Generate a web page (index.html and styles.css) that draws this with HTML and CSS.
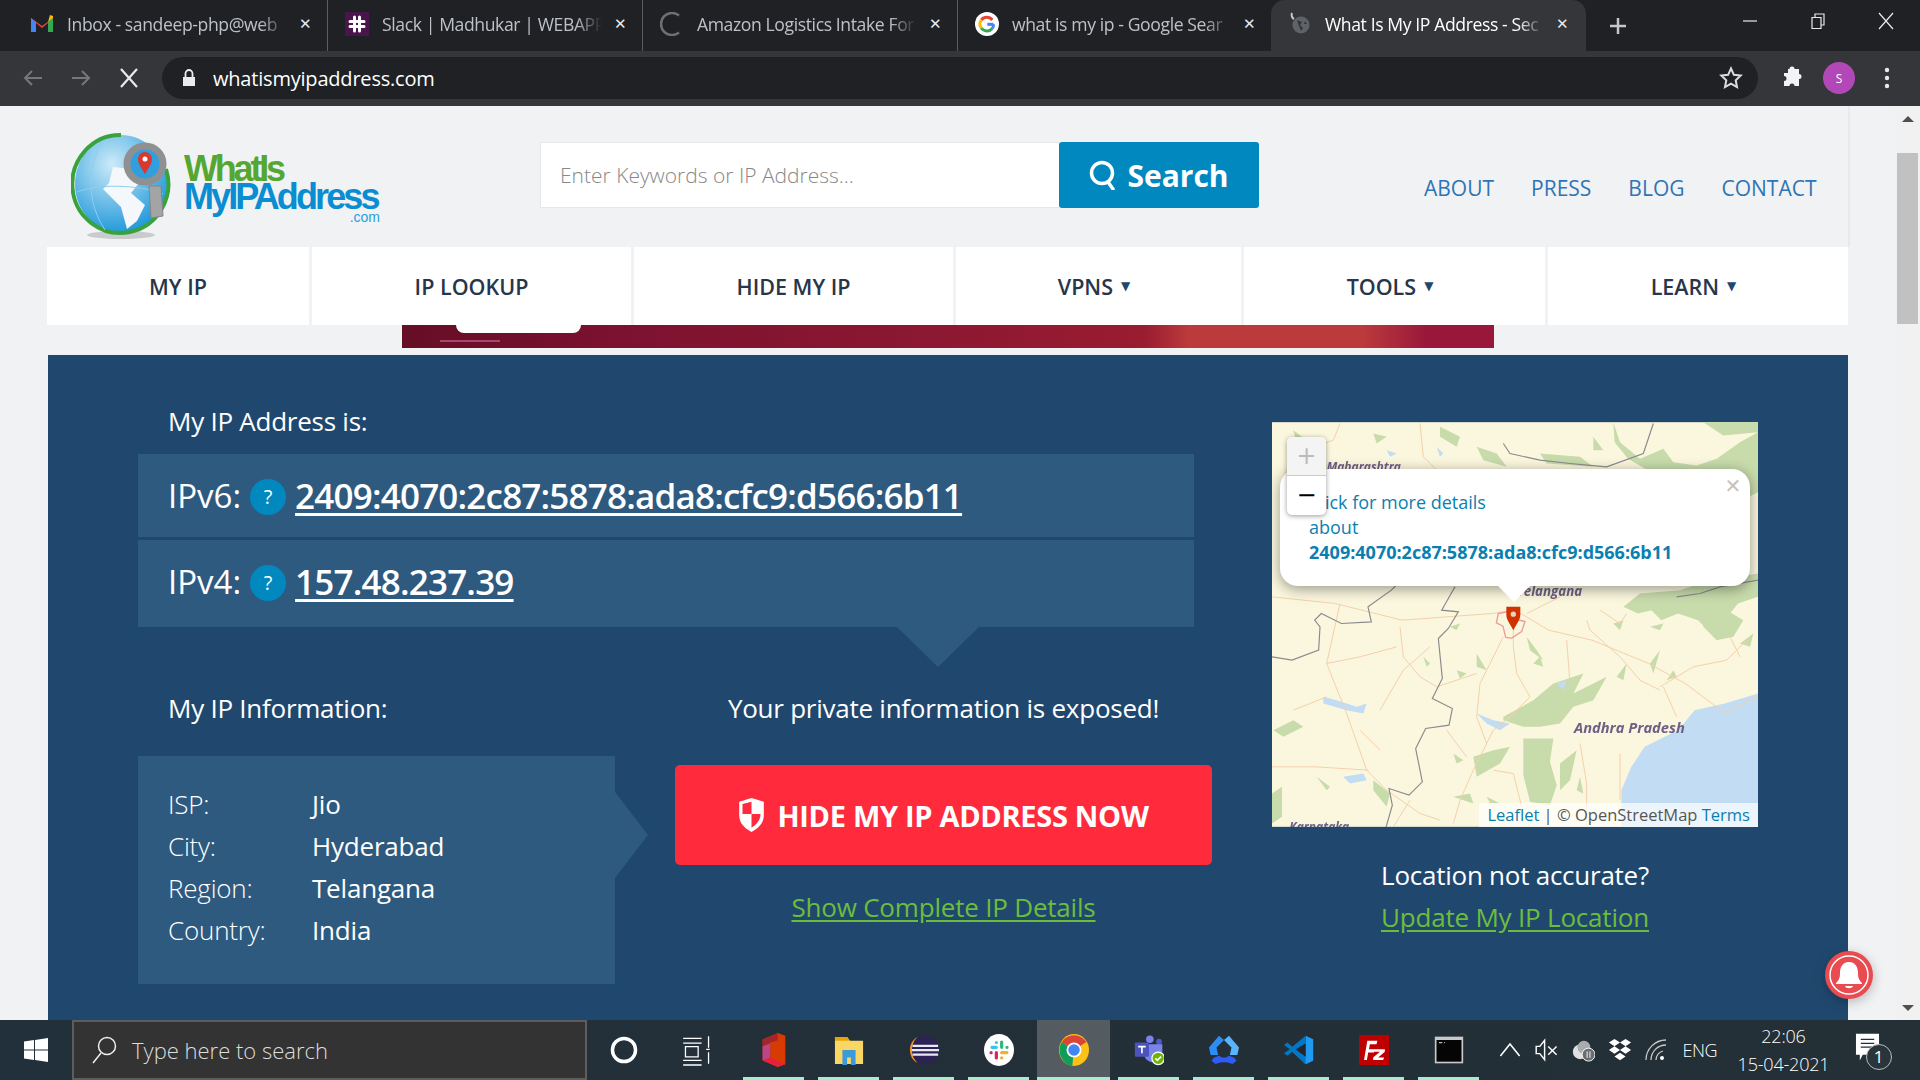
FILE: index.html
```html
<!DOCTYPE html>
<html lang="en">
<head>
    <meta charset="UTF-8">
    <meta name="viewport" content="width=device-width, initial-scale=1.0">
    <title>What Is My IP Address</title>
    <link rel="stylesheet" href="styles.css">
</head>
<body>
    <!-- browser tabs -->
    <div class="tabbar">
        <div class="tab">
            <svg class="tab-icon" viewBox="0 0 24 24"><path d="M1 20V6l11 8 11-8v14h-5V11l-6 5-6-5v9z" fill="#ea4335"/><path d="M1 20V6l5 4v10z" fill="#4285f4"/><path d="M23 20V6l-5 4v10z" fill="#34a853"/><path d="M18 10l5-4V4l-3-1z" fill="#fbbc04"/></svg>
            <span class="tab-title">Inbox - sandeep-php@web</span>
            <span class="tab-close">✕</span>
        </div>
        <div class="tab">
            <svg class="tab-icon" viewBox="0 0 24 24"><rect width="24" height="24" fill="#4a154b"/><path d="M9.5 5v14M14.500 5v14M5 9.500h14M5 14.500h14" stroke="#fff" stroke-width="3" stroke-linecap="round"/></svg>
            <span class="tab-title">Slack | Madhukar | WEBAPP</span>
            <span class="tab-close">✕</span>
        </div>
        <div class="tab">
            <svg class="tab-icon" viewBox="0 0 24 24"><path d="M19 3.500A11 11 0 1 0 19 20.500" fill="none" stroke="#6d7074" stroke-width="2.500"/></svg>
            <span class="tab-title">Amazon Logistics Intake For</span>
            <span class="tab-close">✕</span>
        </div>
        <div class="tab tab-narrow">
            <svg class="tab-icon" viewBox="0 0 24 24"><circle cx="12" cy="12" r="12" fill="#fff"/><path d="M18.500 12.300h-6.200" stroke="#4285f4" stroke-width="3"/><path d="M17.300 8A7 7 0 0 0 6.300 8" fill="none" stroke="#ea4335" stroke-width="3"/><path d="M6.300 8a7 7 0 0 0 0 8" fill="none" stroke="#fbbc04" stroke-width="3"/><path d="M6.300 16a7 7 0 0 0 11 .5" fill="none" stroke="#34a853" stroke-width="3"/><path d="M17.300 16.500a7 7 0 0 0 1.200-4.200" fill="none" stroke="#4285f4" stroke-width="3"/></svg>
            <span class="tab-title">what is my ip - Google Sear</span>
            <span class="tab-close">✕</span>
        </div>
        <div class="tab tab-active">
            <svg class="tab-icon" viewBox="0 0 24 24"><circle cx="13" cy="13" r="8.500" fill="#5f6368"/><path d="M9 8l5 2-2 3 3 3-2 3-2-5zM17 9l2 3-3 0z" fill="#35363a"/><path d="M4 1c-1 2 0 5 2 6" fill="none" stroke="#c9cacc" stroke-width="2"/></svg>
            <span class="tab-title">What Is My IP Address - Sec</span>
            <span class="tab-close">✕</span>
        </div>
        <span class="new-tab">
            <svg viewBox="0 0 18 18"><path d="M9 1v16M1 9h16" stroke="#c6c7c9" stroke-width="2.500"/></svg>
        </span>
        <div class="window-controls">
            <svg viewBox="0 0 18 18"><path d="M2 9h14" stroke="#e8eaed" stroke-width="1.200"/></svg>
            <svg viewBox="0 0 18 18"><path d="M3 5.500h9v11H3zM6 5.500V2h9v11h-3" fill="none" stroke="#e8eaed" stroke-width="1.200"/></svg>
            <svg viewBox="0 0 18 18"><path d="M2 1l14 16M16 1L2 17" stroke="#e8eaed" stroke-width="1.200"/></svg>
        </div>
    </div>

    <!-- address bar -->
    <div class="toolbar">
        <svg class="tool-icon" viewBox="0 0 24 24"><path d="M21 12H4M11 5l-7 7 7 7" fill="none" stroke="#75777a" stroke-width="2"/></svg>
        <svg class="tool-icon" viewBox="0 0 24 24"><path d="M3 12h17M13 5l7 7-7 7" fill="none" stroke="#75777a" stroke-width="2"/></svg>
        <svg class="tool-icon" viewBox="0 0 24 24"><path d="M4 3l16 18M20 3L4 21" fill="none" stroke="#e8eaed" stroke-width="2.200"/></svg>
        <div class="urlbar">
            <svg class="lock" viewBox="0 0 14 18"><path d="M1 8h12v9H1z" fill="#e8eaed"/><path d="M3.500 8V4.500a3.500 3.500 0 0 1 7 0V8" fill="none" stroke="#e8eaed" stroke-width="1.800"/></svg>
            <span class="url">whatismyipaddress.com</span>
            <svg class="star" viewBox="0 0 24 24"><path d="M12 2.500l2.900 6.300 6.800.8-5 4.700 1.300 6.800-6-3.400-6 3.400 1.300-6.800-5-4.700 6.800-.8z" fill="none" stroke="#dadce0" stroke-width="2"/></svg>
        </div>
        <svg class="puzzle" viewBox="0 0 24 24"><path d="M9 3h1.500a2.500 2.500 0 0 1 5 0H20v5a2.500 2.500 0 0 1 0 5v7h-4.500a2.500 2.500 0 0 0-5 0H5v-5a2.500 2.500 0 0 0 0-5V7h4z" fill="#f1f3f4"/></svg>
        <span class="avatar">S</span>
        <svg class="kebab" viewBox="0 0 6 24"><circle cx="3" cy="4" r="2.200" fill="#e8eaed"/><circle cx="3" cy="12" r="2.200" fill="#e8eaed"/><circle cx="3" cy="20" r="2.200" fill="#e8eaed"/></svg>
    </div>

    <div class="viewport">
        <div class="page">
            <header class="site-header">
                <a class="logo">
                    <svg class="logo-globe" viewBox="70 130 104 110">
                        <defs>
                            <radialGradient id="sea" cx="0.4" cy="0.3" r="0.8"><stop offset="0" stop-color="#cdeaf9"/><stop offset="1" stop-color="#0b8fd6"/></radialGradient>
                        </defs>
                        <ellipse cx="120" cy="233" rx="34" ry="4" fill="#c9cbcd"/>
                        <ellipse cx="120" cy="182" rx="46" ry="49" fill="url(#sea)"/>
                        <path d="M120 133a48 49 0 1 0 45 34" fill="none" stroke="#3aa23d" stroke-width="4"/>
                        <path d="M112 165l20 2 6 14-8 10 14 12-8 16-10 8-6-22-10-10-8-8 6-6z" fill="#f4f8fb"/>
                        <path d="M76 190c20-8 60-8 86 2M100 140c-14 30-14 60 4 88" fill="none" stroke="#8fcdf0" stroke-width="1"/>
                        <circle cx="144" cy="162" r="18" fill="#2f9fe0" stroke="#8f9092" stroke-width="7"/>
                        <path d="M148 184h12l2 30-12 2z" fill="#a3a4a6" stroke="#838486"/>
                        <path d="M144 172c-5-8-7-11-7-15a7 7 0 0 1 14 0c0 4-2 7-7 15z" fill="#d8382e"/>
                        <circle cx="144" cy="157" r="2.500" fill="#fff"/>
                    </svg>
                    <span class="logo-text">
                        <span class="logo-what">WhatIs</span>
                        <span class="logo-ip">MyIPAddress</span>
                        <span class="logo-com">.com</span>
                    </span>
                </a>
                <div class="search">
                    <div class="search-input">Enter Keywords or IP Address...</div>
                    <div class="search-btn">
                        <svg viewBox="0 0 28 30"><circle cx="13" cy="13" r="10.500" fill="none" stroke="#fff" stroke-width="3.500"/><path d="M19 22l5 7" stroke="#fff" stroke-width="3.500" stroke-linecap="round"/></svg>
                        Search
                    </div>
                </div>
                <nav class="top-links">
                    <a>ABOUT</a>
                    <a>PRESS</a>
                    <a>BLOG</a>
                    <a>CONTACT</a>
                </nav>
            </header>

            <nav class="menu">
                <a>MY IP</a>
                <a>IP LOOKUP</a>
                <a>HIDE MY IP</a>
                <a class="has-drop">VPNS <i>▼</i></a>
                <a class="has-drop">TOOLS <i>▼</i></a>
                <a class="has-drop">LEARN <i>▼</i></a>
            </nav>

            <div class="banner"><span class="banner-pill"></span><span class="banner-line"></span></div>

            <main class="panel">
                <section class="panel-left">
                    <h2 class="label address-label">My IP Address is:</h2>
                    <div class="ip-row">
                        <span class="ip-name">IPv6:</span>
                        <span class="ip-help">?</span>
                        <a class="ip-value">2409:4070:2c87:5878:ada8:cfc9:d566:6b11</a>
                    </div>
                    <div class="ip-row ip-row-last">
                        <span class="ip-name">IPv4:</span>
                        <span class="ip-help">?</span>
                        <a class="ip-value">157.48.237.39</a>
                    </div>
                    <div class="lower">
                        <div class="info-col">
                            <h2 class="label info-label">My IP Information:</h2>
                            <dl class="info-box">
                                <dt>ISP:</dt><dd>Jio</dd>
                                <dt>City:</dt><dd>Hyderabad</dd>
                                <dt>Region:</dt><dd>Telangana</dd>
                                <dt>Country:</dt><dd>India</dd>
                            </dl>
                        </div>
                        <div class="action-col">
                            <h2 class="label exposed">Your private information is exposed!</h2>
                            <a class="hide-btn">
                                <svg viewBox="0 0 28 38"><path d="M14 1l13 4v14c0 9-6 14-13 18C7 33 1 28 1 19V5z" fill="#fff"/><path d="M14 5v13H4.500V7.500zM14 18h9.500c0 7-4.500 11-9.500 14.500z" fill="#ff2b3d"/></svg>
                                HIDE MY IP ADDRESS NOW
                            </a>
                            <a class="green-link details-link">Show Complete IP Details</a>
                        </div>
                    </div>
                </section>

                <section class="panel-right">
                    <div class="map">
                        <svg class="map-tiles" viewBox="36 36 1458 1214">
                            <rect x="36" y="36" width="1458" height="1214" fill="#fbf7de"/>
                            <g fill="#c7dbab">
                                <path d="M1060 36l20 60 60 50 70-30 30 40 70 10 60-20 70-50 54-30v180l-60 30-40-30-90-10-70-40-60-10-70-40-40-50zM1330 36l60 40 104-10V36z"/>
                                <path d="M1090 590l50-40 120-10 60-20 174-30v70l-60 20-40 50-50 30-30-30-60-20-50 20-30-30-40 10z"/>
                                <path d="M1330 610l70-10 50 30-30 50-50 10-40-40z"/>
                                <path d="M540 50l60 30-10 30-50-30zM650 110l60 20 30 40-70-20zM840 130l120 10 40 30-140-10zM1010 190l60 20-40 30z"/>
                                <path d="M730 920l90-50 60-50 90-30-30 60 60-30 40-20-40 70-60 20-40 50-60 10-50 0-60-20z"/>
                                <path d="M790 985h90l-10 70 20 70-20 60-60-10-20-80zM640 1040l60-20 50-10-30 50-70 40zM900 1060l50-40-20 90-30 30zM1170 760l30-40-20 70zM1070 800l30-40-10 50zM800 680l30 40 20 30-40-30zM650 730l30 50-30-10zM590 780l30 10-20 15zM490 740l20 20-10 10z"/>
                                <path d="M170 1100l40 30-10 10zM340 1110l50 40-10 40-40-50zM36 1150l30-20 0 90-30 20zM40 960l60-30 30 20-60 30zM580 1030l30 20-20 10zM580 1160l50-10 10 30zM680 1160l40 20-30 0zM960 1100l10 50-20-10z"/>
                                <path d="M1170 650l40-10-10 20zM1060 640l30-10-10 30zM820 760l30 10-10-30zM600 640l-30 10 20 10zM1440 700l40-30-10 40zM1240 780l-20 30 30-10zM100 60l40 30-30 10zM340 70l40 10-30 20zM1000 80l30 40-30 0z"/>
                            </g>
                            <g fill="#c1dcf3">
                                <path d="M1494 850l-100 30-90 20-50 60-100 50-40 60-30 70v110l80 0h330z"/>
                                <path d="M190 860l40 10 60 20 30-10-10 30-50-10-70-20zM650 910l50 20 50 10-30 20-40-20zM530 110l20 20-10 10zM380 120l30 10-20 10zM890 820l30-10-10 30zM250 1100l60-10 10 20-50 10z"/>
                            </g>
                            <g fill="none" stroke="#f5d0aa" stroke-width="3">
                                <path d="M36 560l190 20 200 50 270-20 70-10 100 60 130 30 170 70 110 60 120 90 110-60 180-60"/>
                                <path d="M760 640v70l10 80 40 70-60 60-50 40-60 120-40 90-20 70"/>
                                <path d="M730 680l-40 80-30 60-10 100 30 80"/>
                                <path d="M200 760l60 150 60 170 60 60 100 70 60 20M36 1070l130 0 160 10"/>
                                <path d="M420 650l10 90 50 60 50 30 120-40M360 900l70-120 80-70M200 760l100-20 110-30"/>
                                <path d="M920 690l10 130M990 660l90 80 60 70 60 30M1210 830l40 90M240 580l-40 180"/>
                                <path d="M480 40l10 100 60 60M240 40l-20 50-120 40M900 560l-100 50M1020 600l60 40 20-30"/>
                                <path d="M1200 830l100-60 100-20 60-60M980 630l10 30M1410 680l30 60M100 900l100-40M300 960l60 60M560 960l60 80M700 1080l60 10 30 120M960 1000l20 120 0 130M1080 1030l0 140M400 1250l50-80"/>
                            </g>
                            <g fill="none" stroke="#8b8a8d" stroke-width="3.500">
                                <path d="M36 740l60 10 80-30 4-70-16-20 20-20 60 30 90-5-10-45 70-50 30-30"/>
                                <path d="M585 530l-40 70 50 5-30 50-30 30 12 120-30 60 60 30-10 50-70 10-30 60 20 100-40 40-60-20 10 50-20 70"/>
                                <path d="M730 100l20 30 90 20 90 10 110 10 110-40 30-90M1250 560l70-10 60-20 114-20"/>
                            </g>
                            <path d="M715 610l30-6 10 20 40 10-10 30-30 20-18-2-8-34-20-10z" fill="none" stroke="#f09a95" stroke-width="4"/>
                            <g class="map-label">
                                <text x="200" y="182">Maharashtra</text>
                                <text x="770" y="558" class="map-label-mid">Telangana</text>
                                <text x="942" y="968" class="map-label-big">Andhra Pradesh</text>
                                <text x="88" y="1262">Karnataka</text>
                            </g>
                            <path d="M760 660c-14-24-21-34-21-46v-24h42v24c0 12-7 22-21 46z" fill="#d03300"/>
                            <circle cx="760" cy="612" r="8" fill="#f2cfc2"/>
                        </svg>
                        <div class="zoom-control">
                            <span class="zoom-in">+</span>
                            <span class="zoom-out">−</span>
                        </div>
                        <div class="popup">
                            <span class="popup-close">✕</span>
                            <a>Click for more details<br>about<br><b>2409:4070:2c87:5878:ada8:cfc9:d566:6b11</b></a>
                        </div>
                        <div class="attribution"><a>Leaflet</a> | © OpenStreetMap <a>Terms</a></div>
                    </div>
                    <p class="label not-accurate">Location not accurate?</p>
                    <a class="green-link update-link">Update My IP Location</a>
                </section>
            </main>

            <div class="bell">
                <svg viewBox="0 0 40 40"><circle cx="20" cy="20" r="19" fill="none" stroke="#fff" stroke-width="1.500"/><path d="M20 7c-7 0-9 6-9 11 0 5-1 7-4 10v1h26v-1c-3-3-4-5-4-10 0-5-2-11-9-11z" fill="#fff"/><path d="M16 31h8c-1 3-7 3-8 0z" fill="#fff"/></svg>
            </div>
        </div>
        <div class="scrollbar">
            <span class="scroll-up"></span>
            <span class="scroll-thumb"></span>
            <span class="scroll-down"></span>
        </div>
    </div>

    <!-- windows taskbar -->
    <div class="taskbar">
        <div class="start">
            <svg viewBox="0 0 24 24"><path d="M0 3.500l10-1.400V11.500H0zM11 2l13-2v11.500H11zM0 12.500h10V22L0 20.500zM11 12.500h13V24l-13-2z" fill="#fff"/></svg>
        </div>
        <div class="task-search">
            <svg viewBox="0 0 26 28"><circle cx="16" cy="10" r="8.500" fill="none" stroke="#eee" stroke-width="1.500"/><path d="M10 17L2 27" stroke="#eee" stroke-width="1.500"/></svg>
            <span>Type here to search</span>
        </div>
        <div class="task-icons">
            <span class="task"><svg viewBox="0 0 26 26"><circle cx="13" cy="13" r="10" fill="none" stroke="#fff" stroke-width="3"/></svg></span>
            <span class="task task-view"><svg viewBox="0 0 26 26"><path d="M1 3h16M1 7h16M3 10h11v9H3zM1 22h16M1 26h16M23 1v10M23 15v10M21 12.500h3" fill="none" stroke="#fff" stroke-width="1.100"/></svg></span>
            <span class="task task-open"><svg viewBox="0 0 26 36"><path d="M17 0l8 3v30l-8 3L1 29V7z" fill="#d83b01"/><path d="M17 0L1 7v22l8-3V10l8-2z" fill="#a4262c"/><path d="M1 29l16 7 8-3-16-7z" fill="#e8203a"/><path d="M1 14l8-3v15l-8 3z" fill="#b7478a"/></svg></span>
            <span class="task task-open"><svg viewBox="0 0 32 34"><path d="M1 3h13l3 4h14v25H1z" fill="#fcd664"/><path d="M1 3h13l3 4H1z" fill="#e5a50a"/><path d="M9 17h14v16h-5v-8h-4v8H9z" fill="#3b9ad9"/></svg></span>
            <span class="task task-open"><svg viewBox="0 0 34 36"><circle cx="18" cy="18" r="16" fill="#2c2255"/><path d="M10 3a17 17 0 0 0 0 30A20 20 0 0 1 10 3z" fill="#f7941e"/><path d="M4 12h29v2.500H4zM3 17h31v2.500H3zM4 22h29v2.500H4z" fill="#e8e8f4"/></svg></span>
            <span class="task task-open"><svg viewBox="0 0 34 36"><ellipse cx="17" cy="18" rx="17" ry="18" fill="#fff"/><g stroke-width="3.600" stroke-linecap="round"><path d="M9 15h5M14 9.500h.1" stroke="#36c5f0"/><path d="M20 9v6M26 15h.1" stroke="#2eb67d"/><path d="M20 21h6M20 27h.1" stroke="#ecb22e"/><path d="M14 21v6M8 21h.1" stroke="#e01e5a"/></g></svg></span>
            <span class="task task-active"><svg viewBox="0 0 34 36"><ellipse cx="17" cy="18" rx="17" ry="18" fill="#fbc116"/><path d="M17 18L3 9A17 18 0 0 1 31 9z" fill="#db4437"/><path d="M17 18L3 9A17 18 0 0 0 15 36z" fill="#0f9d58"/><circle cx="17" cy="18" r="8.500" fill="#fff"/><circle cx="17" cy="18" r="6.500" fill="#4285f4"/></svg></span>
            <span class="task task-open"><svg viewBox="0 0 36 36"><circle cx="19" cy="5" r="4.500" fill="#7b83eb"/><circle cx="30" cy="8" r="3.500" fill="#5059c9"/><path d="M12 11h22v11c0 8-5 11-10 11s-12-3-12-11z" fill="#7b83eb"/><rect x="1" y="9" width="17" height="17" rx="1.500" fill="#4b53bc"/><path d="M5 13h9v2h-3.500v7h-2v-7H5z" fill="#fff"/><circle cx="29" cy="28" r="7.500" fill="#6bb700" stroke="#fff" stroke-width="1.500"/><path d="M25.500 28l2.500 2.500 4.500-4.500" fill="none" stroke="#fff" stroke-width="2"/></svg></span>
            <span class="task task-open"><svg viewBox="0 0 36 36"><path d="M12 1l6 5-9 9 2 9-9 0-2-9z" fill="#2e8cf5"/><path d="M24 1l-6 5 9 9-2 9 9 0 2-9z" fill="#59b4fb"/><path d="M6 27l6-2c4 3 8 3 12 0l6 2 3 4-5 4c-5-3-15-3-20 0l-5-4z" fill="#2e5cf5"/></svg></span>
            <span class="task task-open"><svg viewBox="0 0 36 36"><path d="M26 1l9 4v26l-9 4-16-15 16-12z" fill="#1f9cf0"/><path d="M26 1v34L10 20 4 25 0 22l7-5-7-5 4-3 6 5z" fill="#0078c8"/><path d="M26 10L14 17.500 26 26z" fill="#23272c"/></svg></span>
            <span class="task task-open"><svg viewBox="0 0 36 36"><rect width="36" height="36" fill="#bf0000"/><path d="M6 30L10 7h12l-1 4h-8l-1 6h7l-1 4h-7l-1.500 9zM19 17h12v3l-8 7h7l-1 3H17v-3l8-7h-7z" fill="#fff"/></svg></span>
            <span class="task task-open"><svg viewBox="0 0 36 36"><rect x="1" y="2" width="34" height="32" fill="#c8c9ca"/><rect x="3" y="6" width="30" height="26" fill="#050505"/><path d="M6 9h4M12 9h1" stroke="#bbb" stroke-width="1.500"/></svg></span>
        </div>
        <div class="tray">
            <span class="tray-icon"><svg viewBox="0 0 20 20"><path d="M2 15l8-10 8 10" fill="none" stroke="#fff" stroke-width="1.300"/></svg></span>
            <span class="tray-icon"><svg viewBox="0 0 20 20"><path d="M1 7h3l4-5v16l-4-5H1zM11 7l7 7M18 7l-7 7" fill="none" stroke="#fff" stroke-width="1.200"/></svg></span>
            <span class="tray-icon"><svg viewBox="0 0 26 24"><circle cx="10" cy="14" r="8" fill="#dfe0e1"/><circle cx="14" cy="9" r="7" fill="#a9acae"/><circle cx="19" cy="17" r="7" fill="#6a6d70" stroke="#fff" stroke-width="1"/><path d="M17.500 13.500v7M20.500 13.500v7" stroke="#fff"/></svg></span>
            <span class="tray-icon"><svg viewBox="0 0 24 26"><path d="M6 1l6 4-6 4-6-4zM18 1l6 4-6 4-6-4zM6 9l6 4-6 4-6-4zM18 9l6 4-6 4-6-4zM12 16l6 4-6 4-6-4z" fill="#fff"/></svg></span>
            <span class="tray-icon"><svg viewBox="0 0 24 24"><path d="M2 22A20 20 0 0 1 22 2M7 22A15 15 0 0 1 22 7M12 22A10 10 0 0 1 19 13" fill="none" stroke="#c9cbcc" stroke-width="1.300"/><circle cx="18" cy="20" r="2" fill="#fff"/></svg></span>
            <span class="tray-lang">ENG</span>
            <span class="tray-clock">22:06<br>15-04-2021</span>
            <span class="notify">
                <svg viewBox="0 0 26 36"><path d="M1 1h24v22H8l-3 6v-6H1z" fill="#fff"/><path d="M6 7h14M6 11h14M6 15h14" stroke="#232f36" stroke-width="1.300"/></svg>
                <span class="notify-count">1</span>
            </span>
        </div>
    </div>
</body>
</html>
```

FILE: styles.css
```css
* {
    box-sizing: border-box;
}
html, body {
    margin: 0;
    padding: 0;
    height: 100%;
    overflow: hidden;
}
body {
    display: flex;
    flex-direction: column;
    width: 1920px;
    height: 1080px;
    font-family: "Open Sans", "Liberation Sans", sans-serif;
    background: #f1f2f4;
}
a {
    text-decoration: none;
}

/* browser chrome */
.tabbar {
    display: flex;
    align-items: flex-end;
    height: 51px;
    padding-left: 13px;
    background: #202124;
}
.tab {
    display: flex;
    align-items: center;
    width: 315px;
    height: 51px;
    padding: 0 12px 3px 17px;
    color: #bdc1c6;
    font-size: 17.600px;
    letter-spacing: -0.4px;
    border-right: 1px solid #5b5d60;
    background-clip: padding-box;
}
.tab-narrow {
    width: 313px;
    border-right: 0;
}
.tab-active {
    height: 51px;
    padding-right: 14px;
    background: #35363a;
    border: 0;
    border-radius: 14px 14px 0 0;
    color: #fff;
}
.tab-icon {
    width: 24px;
    height: 24px;
    flex: none;
    margin-right: 13px;
}
.tab-title {
    flex: 1;
    min-width: 0;
    overflow: hidden;
    white-space: nowrap;
    -webkit-mask-image: linear-gradient(to right, #000 88%, transparent 100%);
    mask-image: linear-gradient(to right, #000 88%, transparent 100%);
}
.tab-close {
    flex: none;
    width: 20px;
    margin-left: 8px;
    font-size: 15px;
    font-weight: 700;
    font-family: "DejaVu Sans", sans-serif;
    color: #e8eaed;
    text-align: center;
}
.new-tab {
    display: flex;
    margin: 0 0 16px 23px;
}
.new-tab svg {
    width: 18px;
    height: 18px;
}
.window-controls {
    display: flex;
    gap: 50px;
    margin: 0 0 21px 114px;
}
.window-controls svg {
    width: 18px;
    height: 18px;
}

.toolbar {
    display: flex;
    align-items: center;
    height: 55px;
    padding: 6px 0 7px 21px;
    background: #35363a;
}
.tool-icon {
    width: 24px;
    height: 24px;
    margin-right: 24px;
}
.urlbar {
    display: flex;
    align-items: center;
    width: 1596px;
    height: 42px;
    margin-left: -3px;
    padding: 0 15px 0 20px;
    background: #202124;
    border-radius: 21px;
}
.lock {
    width: 14px;
    height: 18px;
    margin-right: 17px;
}
.url {
    flex: 1;
    color: #fff;
    font-size: 20px;
    letter-spacing: -0.2px;
}
.star {
    width: 24px;
    height: 24px;
}
.puzzle {
    width: 24px;
    height: 24px;
    margin-left: 21px;
}
.avatar {
    display: flex;
    align-items: center;
    justify-content: center;
    width: 32px;
    height: 32px;
    margin-left: 20px;
    border-radius: 50%;
    background: #b247b8;
    color: #fff;
    font-size: 12px;
}
.kebab {
    width: 6px;
    height: 24px;
    margin-left: 29px;
}

/* page */
.viewport {
    display: flex;
    flex: 1;
    min-height: 0;
}
.page {
    position: relative;
    width: 1895px;
    padding-left: 48px;
    overflow: hidden;
}
.site-header {
    display: flex;
    width: 1802px;
    height: 141px;
    border-right: 2px solid #e8e9eb;
}
.logo {
    display: flex;
    margin: 26px 0 0 25px;
    height: 110px;
}
.logo-globe {
    width: 104px;
    height: 110px;
    margin-left: -2px;
}
.logo-text {
    display: flex;
    flex-direction: column;
    margin: 23px 0 0 9px;
    width: 196px;
    font-family: "Liberation Sans", sans-serif;
    font-weight: 700;
    font-size: 36px;
    line-height: 28px;
}
.logo-what {
    color: #56a632;
    letter-spacing: -3.200px;
}
.logo-ip {
    color: #0b8dd2;
    letter-spacing: -2.900px;
}
.logo-com {
    align-self: flex-end;
    margin-top: -1px;
    color: #27a0dc;
    font-size: 14px;
    font-weight: 400;
    line-height: 14px;
}
.search {
    display: flex;
    height: 66px;
    margin: 36px 0 0 160px;
}
.search-input {
    width: 519px;
    padding: 0 19px;
    background: #fff;
    border: 1px solid #e8e8e8;
    border-right: 0;
    color: #888;
    font-size: 21px;
    font-weight: 300;
    line-height: 64px;
}
.search-btn {
    display: flex;
    align-items: center;
    justify-content: center;
    gap: 10px;
    width: 200px;
    background: #0088bf;
    border-radius: 3px;
    color: #fff;
    font-size: 30px;
    font-weight: 700;
}
.search-btn svg {
    width: 28px;
    height: 30px;
}
.top-links {
    display: flex;
    gap: 37px;
    margin: 68px 0 0 165px;
    font-size: 21px;
    line-height: 29px;
}
.top-links a {
    color: #2f74b5;
}

.menu {
    display: grid;
    grid-template-columns: 262px 319px 319px 285px 301px 300px;
    gap: 3px;
    width: 1801px;
    margin-left: -1px;
    height: 78px;
}
.menu a {
    display: flex;
    align-items: center;
    justify-content: center;
    gap: 8px;
    background: #fff;
    color: #27364a;
    font-size: 21.500px;
    font-weight: 600;
}
.menu .has-drop {
    padding-right: 9px;
}
.menu i {
    font-size: 12px;
    font-style: normal;
    color: #1f4870;
    font-family: "DejaVu Sans", sans-serif;
}

.banner {
    position: relative;
    width: 1092px;
    height: 23px;
    margin: 0 0 7px 354px;
    background: linear-gradient(to right, #650e25 0, #7c1230 20%, #8d1832 50%, #991c30 68%, #bb3a3c 72%, #bb3a3c 88%, #98173a 94%);
}
.banner-pill {
    position: absolute;
    left: 54px;
    top: 0;
    width: 125px;
    height: 8px;
    background: #fff;
    border-radius: 0 0 8px 8px;
}
.banner-line {
    position: absolute;
    left: 38px;
    top: 15px;
    width: 60px;
    height: 2px;
    background: #a8476e;
}

.panel {
    display: flex;
    width: 1800px;
    height: 665px;
    padding-left: 90px;
    background: #20486f;
    color: #fff;
}
.panel-left {
    width: 1074px;
    flex: none;
}
.label {
    margin: 0;
    font-size: 26px;
    font-weight: 400;
    letter-spacing: -0.25px;
    line-height: 36px;
}
.address-label {
    padding: 48px 0 0 30px;
    height: 99px;
}
.ip-row {
    display: flex;
    align-items: center;
    width: 1056px;
    height: 83px;
    margin-bottom: 3px;
    padding: 0 0 0 30px;
    background: #2e5a80;
}
.ip-row-last {
    position: relative;
    height: 87px;
    margin-bottom: 0;
    padding-bottom: 4px;
}
.ip-row-last::after {
    content: "";
    position: absolute;
    left: 759px;
    top: 100%;
    border-style: solid;
    border-width: 40px 41px 0;
    border-color: #2e5a80 transparent transparent;
}
.ip-name {
    font-size: 33px;
    font-weight: 400;
}
.ip-help {
    display: flex;
    align-items: center;
    justify-content: center;
    width: 36px;
    height: 36px;
    margin: 2px 9px 0 9px;
    border-radius: 50%;
    background: #0088bf;
    font-size: 20px;
}
.ip-value {
    color: #fff;
    font-size: 35px;
    font-weight: 600;
    letter-spacing: -0.8px;
    text-decoration: underline;
    text-decoration-thickness: 3px;
    text-underline-offset: 4px;
}
.lower {
    display: flex;
    margin-top: 63px;
}
.info-col {
    width: 537px;
}
.info-label {
    padding-left: 30px;
}
.info-box {
    position: relative;
    display: grid;
    grid-template-columns: 144px 1fr;
    align-content: center;
    width: 477px;
    height: 228px;
    margin: 30px 0 0;
    padding: 0 0 6px 30px;
    background: #2e5a80;
    font-size: 26px;
    letter-spacing: -0.2px;
    line-height: 42px;
}
.info-box::after {
    content: "";
    position: absolute;
    left: 100%;
    top: 36px;
    border-style: solid;
    border-width: 43px 0 43px 33px;
    border-color: transparent transparent transparent #2e5a80;
}
.info-box dt {
    font-weight: 300;
}
.info-box dd {
    margin: 0;
}
.action-col {
    display: flex;
    flex-direction: column;
    align-items: center;
    width: 537px;
}
.hide-btn {
    display: flex;
    align-items: center;
    justify-content: center;
    gap: 12px;
    width: 537px;
    height: 100px;
    margin-top: 39px;
    background: #ff2b3d;
    border-radius: 5px;
    color: #fff;
    font-size: 29px;
    font-weight: 700;
    letter-spacing: -0.3px;
}
.hide-btn svg {
    width: 27px;
    height: 36px;
}
.green-link {
    color: #6cbd3c;
    font-size: 26px;
    letter-spacing: -0.2px;
    line-height: 36px;
    text-decoration: underline;
    text-underline-offset: 3px;
}
.details-link {
    margin-top: 24px;
}
.panel-right {
    display: flex;
    flex-direction: column;
    align-items: center;
    width: 486px;
    margin-left: 60px;
    padding-top: 67px;
}
.not-accurate {
    margin-top: 30px;
}
.update-link {
    margin-top: 6px;
}

/* map, the leaflet parts sit over the tiles */
.map {
    position: relative;
    width: 486px;
    height: 405px;
    overflow: hidden;
    flex: none;
}
.map-tiles {
    display: block;
    width: 486px;
    height: 405px;
    filter: blur(0.4px);
}
.map-label text {
    fill: #6d5f85;
    font-family: "Open Sans", sans-serif;
    font-size: 36px;
    font-style: italic;
    font-weight: 700;
}
.map-label .map-label-big {
    font-size: 44px;
}
.map-label .map-label-mid {
    font-size: 40px;
}
.zoom-control {
    position: absolute;
    z-index: 3;
    left: 15px;
    top: 15px;
    width: 39px;
    height: 78px;
    border-radius: 5px;
    background: #fff;
    box-shadow: 0 1px 5px rgba(0,0,0,0.4);
    font-family: "DejaVu Sans", sans-serif;
    text-align: center;
    font-size: 24px;
    line-height: 38px;
}
.zoom-in {
    display: block;
    height: 39px;
    background: #f4f4f4;
    border-bottom: 1px solid #ccc;
    border-radius: 5px 5px 0 0;
    color: #bbb;
}
.zoom-out {
    display: block;
    color: #000;
}
.popup {
    position: absolute;
    left: 8px;
    top: 47px;
    width: 470px;
    height: 117px;
    padding: 21px 0 0 29px;
    background: #fff;
    border-radius: 18px;
    box-shadow: 0 3px 14px rgba(0,0,0,0.4);
    font-size: 18px;
    line-height: 25px;
}
.popup a {
    color: #0a7fb0;
}
.popup b {
    font-weight: 700;
}
.popup::after {
    content: "";
    position: absolute;
    left: 218px;
    top: 100%;
    border-style: solid;
    border-width: 16px 16px 0;
    border-color: #fff transparent transparent;
}
.popup-close {
    position: absolute;
    right: 6px;
    top: 5px;
    width: 22px;
    color: #c3c3c3;
    font-size: 20px;
    font-weight: 700;
    font-family: "DejaVu Sans", sans-serif;
    text-align: center;
}
.attribution {
    position: absolute;
    right: 0;
    bottom: 0;
    height: 24px;
    padding: 0 8px;
    background: rgba(255,255,255,0.7);
    color: #555;
    font-size: 16.500px;
    line-height: 24px;
    white-space: nowrap;
}
.attribution a {
    color: #0a7fb0;
}
.bell {
    position: absolute;
    left: 1825px;
    top: 845px;
    width: 48px;
    height: 48px;
    padding: 4px;
    border-radius: 50%;
    background: #e84b50;
    box-shadow: 0 3px 12px rgba(0,0,0,0.25);
}
.bell svg {
    display: block;
    width: 40px;
    height: 40px;
}

.scrollbar {
    flex: 1;
    position: relative;
    background: #f1f1f1;
}
.scroll-thumb {
    position: absolute;
    left: 2px;
    top: 47px;
    width: 21px;
    height: 171px;
    background: #c1c1c1;
}
.scroll-up,
.scroll-down {
    position: absolute;
    left: 7px;
    border-style: solid;
    border-color: transparent;
    border-width: 0 6px;
}
.scroll-up {
    top: 10px;
    border-bottom: 6px solid #505050;
}
.scroll-down {
    bottom: 9px;
    border-top: 6px solid #505050;
}

/* taskbar */
.taskbar {
    display: flex;
    height: 60px;
    background: linear-gradient(to right, #21303a, #242f36);
    color: #fff;
}
.start {
    display: flex;
    align-items: center;
    justify-content: center;
    width: 72px;
}
.start svg {
    width: 24px;
    height: 24px;
}
.task-search {
    display: flex;
    align-items: center;
    width: 515px;
    padding-left: 17px;
    background: #333;
    border: 2px solid #5d5d5d;
    color: #ddd;
    font-size: 22px;
    font-weight: 300;
}
.task-search svg {
    width: 26px;
    height: 28px;
    margin-right: 15px;
}
.task-icons {
    display: flex;
    margin-left: -1px;
}
.task {
    position: relative;
    display: flex;
    align-items: center;
    justify-content: center;
    width: 75px;
}
.task svg {
    width: 30px;
    height: 34px;
}
.task-view svg {
    margin-right: 4px;
}
.task-open::after {
    content: "";
    position: absolute;
    left: 7px;
    right: 7px;
    bottom: 0;
    height: 3px;
    background: #a2efcf;
}
.task-active {
    background: #555c61;
    width: 73px;
    margin: 0 1px;
}
.task-active::after {
    content: "";
    position: absolute;
    left: 0;
    right: 0;
    bottom: 0;
    height: 3px;
    background: #a2efcf;
}
.tray {
    display: flex;
    align-items: center;
    margin-left: 6px;
}
.tray-icon {
    display: flex;
    justify-content: center;
    width: 36.500px;
}
.tray-icon svg {
    width: 24px;
    height: 24px;
}
.tray-lang {
    width: 51px;
    padding-left: 8px;
    font-size: 18px;
    font-weight: 300;
    letter-spacing: -0.5px;
}
.tray-clock {
    width: 112px;
    padding-left: 4px;
    text-align: center;
    font-size: 18px;
    line-height: 28px;
    font-weight: 300;
    letter-spacing: -0.2px;
}
.notify {
    position: relative;
    display: flex;
    margin-left: 17px;
}
.notify svg {
    width: 25px;
    height: 36px;
}
.notify-count {
    position: absolute;
    left: 11px;
    top: 12px;
    width: 26px;
    height: 26px;
    border-radius: 50%;
    background: #2a353b;
    border: 1px solid #bbb;
    text-align: center;
    font-size: 17px;
    line-height: 24px;
}
```
